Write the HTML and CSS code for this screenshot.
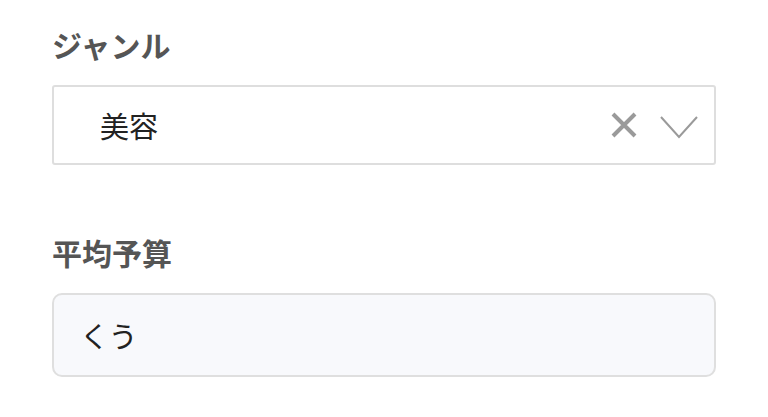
FILE: index.html
```html
<!DOCTYPE html>
<html lang="ja">
<head>
  <meta charset="UTF-8">
  <meta name="viewport" content="width=device-width, initial-scale=1.0">
  <title>ジャンル</title>
  <link rel="stylesheet" href="styles.css">
</head>
<body>
<div class="form">
  <div class="field">
    <label class="label">ジャンル</label>
    <div class="select">
      <span class="select-value">美容</span>
      <span class="select-icons">
        <svg class="icon-clear" width="26" height="26" viewBox="0 0 26 26">
          <path d="M2 2 L24 24 M24 2 L2 24" stroke="#9a9a9a" stroke-width="4" fill="none"/>
        </svg>
        <svg class="icon-arrow" width="38" height="24" viewBox="0 0 38 24">
          <path d="M1 2 L19 22 L37 2" stroke="#9a9a9a" stroke-width="2" fill="none"/>
        </svg>
      </span>
    </div>
  </div>
  <div class="field">
    <label class="label">平均予算</label>
    <input class="text-input" type="text" value="くう">
  </div>
</div>
</body>
</html>
```

FILE: styles.css
```css
body {
  margin: 0;
  font-family: "Noto Sans CJK JP", "Noto Sans", sans-serif;
  background: #fff;
  color: #222;
}
.form {
  padding: 24px 52px 0;
}
.field + .field {
  margin-top: 67px;
}
.label {
  display: block;
  font-size: 30px;
  font-weight: bold;
  line-height: 40px;
  color: #555;
  margin-bottom: 21px;
}
.select {
  display: flex;
  align-items: center;
  justify-content: space-between;
  height: 80px;
  box-sizing: border-box;
  border: 2px solid #dedede;
  border-radius: 3px;
  padding: 0 16px 0 46px;
}
.select-value {
  font-size: 29px;
  color: #222;
}
.select-icons {
  display: flex;
  align-items: center;
  gap: 23px;
}
.icon-arrow {
  margin-top: 4px;
}
.text-input {
  display: block;
  width: 100%;
  height: 84px;
  box-sizing: border-box;
  border: 2px solid #dfdfdf;
  border-radius: 10px;
  background: #f8f9fc;
  padding: 0 26px;
  font-family: inherit;
  font-size: 29px;
  color: #222;
  outline: none;
}
```
